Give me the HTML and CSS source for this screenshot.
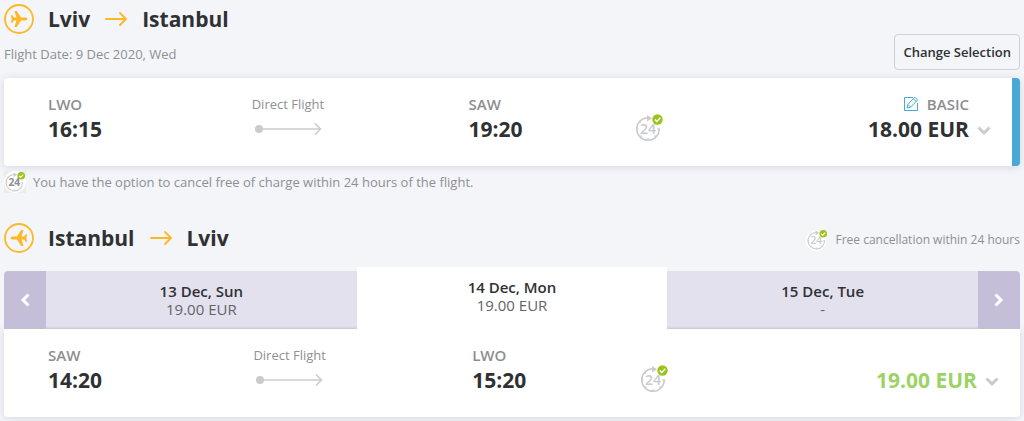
FILE: index.html
```html
<!DOCTYPE html>
<html lang="en">
<head>
    <meta charset="utf-8">
    <title>Flight Selection</title>
    <link rel="stylesheet" href="styles.css">
</head>
<body>
    <!-- shared icons -->
    <svg class="sprite" aria-hidden="true">
        <symbol id="plane" viewBox="0 0 30 30">
            <circle cx="15" cy="15" r="14" fill="none" stroke="currentColor" stroke-width="1.800"/>
            <path fill="currentColor" d="M23.500 15c0 .9-1.200 1.500-3 1.500h-3.400l-4.300 6.500h-2.300l2-6.500h-2.600l-1.600 2.200H6.800l.9-3.700-.9-3.700h1.500l1.600 2.200h2.600l-2-6.500h2.300l4.300 6.500h3.400c1.800 0 3 .6 3 1.500z"/>
        </symbol>
        <symbol id="arrow" viewBox="0 0 22 14">
            <path fill="none" stroke="currentColor" stroke-width="1.800" stroke-linecap="round" stroke-linejoin="round" d="M1 7h20M15 1l6 6-6 6"/>
        </symbol>
        <symbol id="path-line" viewBox="0 0 72 14">
            <circle cx="7" cy="7" r="4" fill="#c9cbcd"/>
            <path fill="none" stroke="#c9cbcd" stroke-width="1.500" d="M10 7h58M63 1.500l5.500 5.500-5.500 5.500"/>
        </symbol>
        <symbol id="cancel24" viewBox="0 0 28 28">
            <path fill="none" stroke="currentColor" stroke-width="1.500" d="M12.500 3.700A11.300 11.300 0 1 0 24.300 15h-1.800"/>
            <path fill="currentColor" d="M12 1l5 3.200-5 3.200z"/>
            <path stroke="currentColor" stroke-width="1.200" d="M1.500 15h2M13 24v2.500M4.500 7l1.500 1.500M5 23l1.500-1.500M21 23l-1.500-1.500"/>
            <circle cx="22.500" cy="5.500" r="5.200" fill="#9bc31c"/>
            <path fill="none" stroke="#fff" stroke-width="1.500" d="M19.800 5.500l2 2 3.500-3.700"/>
        </symbol>
        <symbol id="chevron" viewBox="0 0 14 10">
            <path fill="none" stroke="currentColor" stroke-width="3" d="M1.500 1.500L7 7l5.500-5.500"/>
        </symbol>
        <symbol id="edit" viewBox="0 0 16 16">
            <path fill="none" stroke="currentColor" d="M10 1.500H1.500v13h13V7"/>
            <path fill="none" stroke="currentColor" d="M4 12l.8-3.500 7-7.300 2.900 2.700-7.200 7.300zM5 8.500l2.600 2.600M10.500 2.800l2.700 2.700"/>
        </symbol>
    </svg>

    <main class="page">
        <section class="flight">
            <header class="flight-head">
                <div>
                    <h2 class="route">
                        <svg class="plane"><use href="#plane"/></svg>
                        <span>Lviv</span>
                        <svg class="arrow"><use href="#arrow"/></svg>
                        <span>Istanbul</span>
                    </h2>
                    <p class="date">Flight Date: 9 Dec 2020, Wed</p>
                </div>
                <button class="change" type="button">Change Selection</button>
            </header>
            <div class="card selected">
                <div>
                    <div class="code">LWO</div>
                    <div class="time">16:15</div>
                </div>
                <div class="direct">
                    <div>Direct Flight</div>
                    <svg class="line"><use href="#path-line"/></svg>
                </div>
                <div>
                    <div class="code">SAW</div>
                    <div class="time">19:20</div>
                </div>
                <div class="badge">
                    <svg class="cancel" viewBox="0 0 28 28"><use href="#cancel24"/><text x="13" y="20">24</text></svg>
                </div>
                <div class="fare">
                    <div>
                        <div class="code fare-type"><svg class="edit"><use href="#edit"/></svg>BASIC</div>
                        <div class="price">18.00 EUR</div>
                    </div>
                    <button class="toggle" type="button" aria-label="Show fares"><svg><use href="#chevron"/></svg></button>
                </div>
            </div>
            <p class="note">
                <svg class="cancel small boxed" viewBox="-1 -1 30 30"><circle cx="14" cy="14" r="15" fill="#fff"/><use href="#cancel24" width="28" height="28"/><text x="13" y="20">24</text></svg>
                You have the option to cancel free of charge within 24 hours of the flight.
            </p>
        </section>

        <section class="flight">
            <header class="flight-head return">
                <h2 class="route">
                    <svg class="plane back"><use href="#plane"/></svg>
                    <span>Istanbul</span>
                    <svg class="arrow"><use href="#arrow"/></svg>
                    <span>Lviv</span>
                </h2>
                <p class="free">
                    <svg class="cancel small" viewBox="-1 -1 30 30"><circle cx="13" cy="15" r="14" fill="#fff"/><use href="#cancel24" width="28" height="28"/><text x="13" y="20">24</text></svg>
                    Free cancellation within 24 hours
                </p>
            </header>
            <div class="days">
                <button class="nav prev" type="button" aria-label="Previous day"><svg><use href="#chevron"/></svg></button>
                <button class="day" type="button"><b>13 Dec, Sun</b><span>19.00 EUR</span></button>
                <button class="day active" type="button"><b>14 Dec, Mon</b><span>19.00 EUR</span></button>
                <button class="day" type="button"><b>15 Dec, Tue</b><span>-</span></button>
                <button class="nav next" type="button" aria-label="Next day"><svg><use href="#chevron"/></svg></button>
            </div>
            <div class="card under-days">
                <div>
                    <div class="code">SAW</div>
                    <div class="time">14:20</div>
                </div>
                <div class="direct">
                    <div>Direct Flight</div>
                    <svg class="line"><use href="#path-line"/></svg>
                </div>
                <div>
                    <div class="code">LWO</div>
                    <div class="time">15:20</div>
                </div>
                <div class="badge">
                    <svg class="cancel" viewBox="0 0 28 28"><use href="#cancel24"/><text x="13" y="20">24</text></svg>
                </div>
                <div class="fare">
                    <div class="price green">19.00 EUR</div>
                    <button class="toggle" type="button" aria-label="Show fares"><svg><use href="#chevron"/></svg></button>
                </div>
            </div>
        </section>
    </main>
</body>
</html>
```

FILE: styles.css
```css
* {
    box-sizing: border-box;
}
body {
    margin: 0;
    background: #f3f5f9;
    color: #2f3133;
    font-family: "Open Sans", sans-serif;
    font-size: 13px;
    line-height: 20px;
}
h2, p {
    margin: 0;
}
button {
    font-family: inherit;
    color: inherit;
    cursor: pointer;
}
svg {
    display: block;
    flex: none;
}
.sprite {
    position: absolute;
    width: 0;
    height: 0;
}
.page {
    padding: 4px;
}

/* heading of a flight */
.flight-head {
    display: flex;
    justify-content: space-between;
    align-items: flex-end;
    padding-bottom: 8px;
}
.route {
    display: flex;
    align-items: center;
    font-size: 21px;
    font-weight: 700;
    line-height: 30px;
}
.plane {
    width: 30px;
    height: 30px;
    margin-right: 14px;
    color: #fdb827;
}
.back {
    transform: scaleX(-1);
}
.arrow {
    width: 22px;
    height: 14px;
    margin: 0 15px;
    color: #fdb827;
}
.date {
    margin: 10px 0 6px;
    color: #8e9092;
}
.change {
    height: 36px;
    padding: 0 8px;
    border: 1px solid #d0d1d5;
    border-radius: 4px;
    background: #f3f5f9;
    font-size: 13px;
    font-weight: 600;
}

/* flight card */
.card {
    display: grid;
    grid-template-columns: 216fr 230fr 177fr 40fr 337fr;
    height: 88px;
    padding: 16px 21px 0 44px;
    border-radius: 4px;
    background: #fff;
    box-shadow: 0 1px 8px rgba(60, 60, 80, .16);
}
.selected {
    border-right: 8px solid #48a9d6;
}
.under-days {
    border-radius: 0 0 4px 4px;
}
.code {
    color: #8c8e90;
    font-size: 15px;
    font-weight: 600;
}
.time, .price {
    font-size: 21px;
    font-weight: 700;
    line-height: 30px;
}
.direct {
    color: #8e9092;
}
.line {
    width: 72px;
    height: 14px;
    margin-top: 8px;
}
.cancel {
    width: 28px;
    height: 28px;
    color: #c9cbcd;
}
.cancel text {
    fill: currentColor;
    font-size: 14px;
    font-weight: 600;
    text-anchor: middle;
}
.badge {
    padding-top: 20px;
}
.fare {
    display: flex;
    justify-content: flex-end;
    align-items: flex-end;
    height: 50px;
    gap: 8px;
}
.fare-type {
    display: flex;
    justify-content: flex-end;
    align-items: center;
    gap: 8px;
}
.edit {
    width: 16px;
    height: 16px;
    color: #48a9d6;
}
.green {
    color: #9bd364;
}
.toggle {
    padding: 0 0 8px;
    border: 0;
    background: none;
    color: #c9cbcd;
}
.toggle svg {
    width: 14px;
    height: 10px;
}
.note {
    display: flex;
    align-items: center;
    gap: 7px;
    padding-top: 5px;
    color: #8e9092;
}
.small {
    width: 22px;
    height: 22px;
}
.boxed {
    background: #ececee;
}
.boxed text {
    fill: #8c8e90;
    font-weight: 700;
}

/* return flight */
.return {
    align-items: center;
    padding: 30px 0 14px;
}
.free {
    display: flex;
    align-items: center;
    gap: 7px;
    padding-top: 4px;
    color: #8e9092;
    font-size: 12px;
}
.days {
    display: grid;
    grid-template-columns: 42px 1fr 1fr 1fr 42px;
    align-items: end;
}
.days button {
    height: 58px;
    padding: 0;
    border: 0;
}
.days .day {
    background: #e4e1ee;
    box-shadow: inset 0 -3px 3px -2px rgba(80, 70, 110, .2);
    font-size: 15px;
    line-height: 18px;
}
.days .active {
    height: 62px;
    padding-bottom: 4px;
    background: #fff;
    box-shadow: none;
}
.day b, .day span {
    display: block;
}
.day b {
    font-weight: 600;
}
.day span {
    color: #626466;
}
.nav {
    display: flex;
    justify-content: center;
    align-items: center;
    background: #c5bed9;
    color: #fff;
}
.nav svg {
    width: 14px;
    height: 10px;
}
.prev {
    border-radius: 4px 0 0 0;
}
.next {
    border-radius: 0 4px 0 0;
}
.prev svg {
    transform: rotate(90deg);
}
.next svg {
    transform: rotate(-90deg);
}
```
